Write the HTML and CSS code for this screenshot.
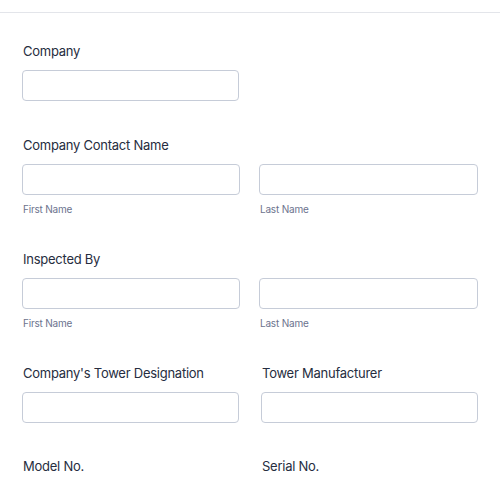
FILE: index.html
```html
<!DOCTYPE html>
<html>
<head>
<meta charset="utf-8">
<link rel="stylesheet" href="styles.css">
</head>
<body>
<div class="topline"></div>
<form class="form">
  <div class="field">
    <label class="label">Company</label>
    <div class="single"><div class="input"></div></div>
  </div>
  <div class="field">
    <label class="label">Company Contact Name</label>
    <div class="pair">
      <div class="sub"><div class="input"></div><span class="sublabel">First Name</span></div>
      <div class="sub"><div class="input"></div><span class="sublabel">Last Name</span></div>
    </div>
  </div>
  <div class="field">
    <label class="label">Inspected By</label>
    <div class="pair">
      <div class="sub"><div class="input"></div><span class="sublabel">First Name</span></div>
      <div class="sub"><div class="input"></div><span class="sublabel">Last Name</span></div>
    </div>
  </div>
  <div class="cols">
    <div class="field half">
      <label class="label">Company's Tower Designation</label>
      <div class="input"></div>
    </div>
    <div class="field half">
      <label class="label">Tower Manufacturer</label>
      <div class="input"></div>
    </div>
  </div>
  <div class="cols">
    <div class="field half">
      <label class="label">Model No.</label>
    </div>
    <div class="field half">
      <label class="label">Serial No.</label>
    </div>
  </div>
</form>
</body>
</html>
```
FILE: styles.css
```css
html, body {
  margin: 0;
  padding: 0;
  background: #ffffff;
  font-family: Inter, "Noto Sans", sans-serif;
  color: #2c3345;
  overflow: hidden;
}
.topline {
  height: 12px;
  border-bottom: 1px solid #e3e5ea;
}
.form {
  display: flex;
  flex-direction: column;
  padding: 0 22px;
}
.field {
  display: flex;
  flex-direction: column;
  padding-top: 28px;
}
.form > .field + .field,
.form > .cols {
  padding-top: 34px;
}
.form > .field:nth-child(3),
.form > .cols {
  padding-top: 33px;
}
.cols > .field { padding-top: 0; }
.label {
  display: block;
  font-size: 13px;
  line-height: 20px;
  font-weight: 400;
  letter-spacing: -0.25px;
  padding-left: 1px;
  margin-bottom: 9px;
  color: #262d40;
}
.single { width: 217px; }
.input {
  height: 29px;
  border: 1px solid #c6ccd8;
  border-radius: 4px;
  background: #fff;
}
.pair {
  display: grid;
  grid-template-columns: 218px 219px;
  column-gap: 19px;
}
.sub { display: flex; flex-direction: column; }
.sublabel {
  font-size: 10px;
  line-height: 14px;
  letter-spacing: -0.2px;
  color: #6c738e;
  margin-top: 7px;
  padding-left: 1px;
}
.cols {
  display: grid;
  grid-template-columns: 217px 217px;
  column-gap: 22px;
}
```
